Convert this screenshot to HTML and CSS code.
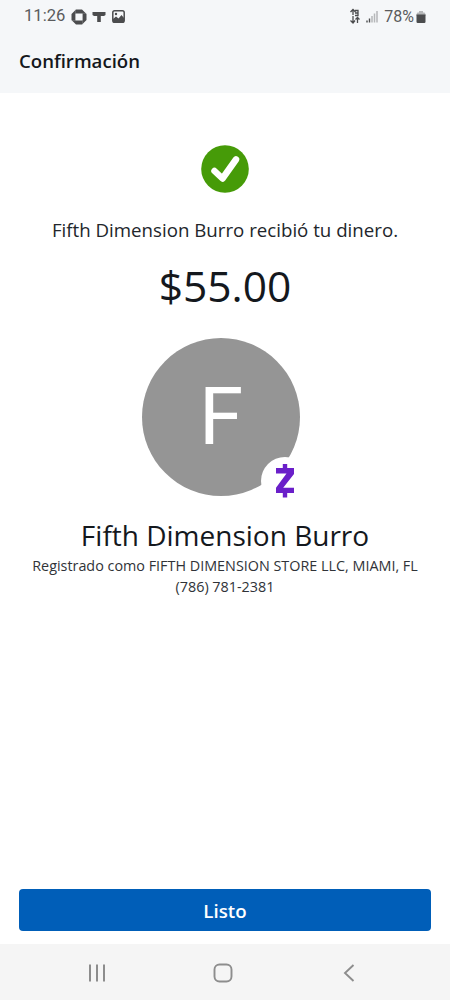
FILE: index.html
```html
<!DOCTYPE html>
<html lang="es">
<head>
    <meta charset="UTF-8">
    <meta name="viewport" content="width=device-width, initial-scale=1.0">
    <title>Confirmación</title>
    <link rel="stylesheet" href="styles.css">
</head>
<body>
    <div class="screen">
        <header class="header">
            <!-- Status bar -->
            <div class="status-bar">
                <span class="time">11:26</span>
                <svg class="icon-bank" width="16" height="16" viewBox="0 0 16 16">
                    <path fill="#4b4c4e" fill-rule="evenodd" d="M5 .5h6L15.500 5v6L11 15.500H5L.5 11V5zM4.400 4.400v7.200h7.200V4.400z"/>
                    <path stroke="#8b8d8f" stroke-width=".5" d="M4.400 .8v4M15.200 4.400h-4M11.600 15.200v-4M.8 11.600h4"/>
                </svg>
                <svg class="icon-tee" width="14" height="12" viewBox="0 0 14 12">
                    <path fill="#4b4c4e" d="M.5 1h13v3L12 5H8.800v6H5.200V5H2L.5 4z"/>
                </svg>
                <svg class="icon-image" width="13" height="13" viewBox="0 0 13 13">
                    <rect x=".8" y=".8" width="11.400" height="11.400" rx="1.800" fill="#f5f7f9" stroke="#4b4c4e" stroke-width="1.500"/>
                    <path fill="#4b4c4e" d="M1 12V9l3-2.500 2.500 2L9.500 5 12 8v4z"/>
                    <circle cx="4" cy="4" r="1.200" fill="#4b4c4e"/>
                </svg>
                <div class="status-right">
                    <svg width="12" height="17" viewBox="0 0 12 17" stroke="#4b4c4e" stroke-width="1.300" fill="none">
                        <path d="M1.500 4L4 1.500 6.500 4M4 2v5M6 2.500h3v5H6M6 5h3M1.500 12.500L4 15l2-2.500M4 8v7M6.500 11.500l2-2 2 2M8.500 10v5"/>
                    </svg>
                    <svg class="icon-signal" width="12" height="13" viewBox="0 0 12 13">
                        <path stroke="#4b4c4e" stroke-width="1.400" d="M1 12.500v-2M3.500 12.500v-4"/>
                        <path stroke="#b5b7b9" stroke-width="1.500" d="M6 12.500V6M8.500 12.500V3.500M11 12.500V1"/>
                    </svg>
                    <span class="battery-text">78%</span>
                    <svg width="10" height="14" viewBox="0 0 10 14">
                        <path fill="#b5b7b9" d="M3 1h4v1.500h1.500L9.500 4v2h-9V4l1-1.500H3z"/>
                        <path fill="#4b4c4e" d="M.5 4.500h9v7.300q0 1.200-1.200 1.200H1.700Q.5 13 .5 11.800z"/>
                    </svg>
                </div>
            </div>
            <h1>Confirmación</h1>
        </header>

        <main class="content">
            <svg class="check" width="48" height="48" viewBox="0 0 48 48">
                <circle cx="24" cy="24" r="23.800" fill="#469b08"/>
                <path d="M13.500 26l8 7.500L35 14.500" fill="none" stroke="#fff" stroke-width="6.500" stroke-linecap="round" stroke-linejoin="round"/>
            </svg>
            <p class="message">Fifth Dimension Burro recibió tu dinero.</p>
            <p class="amount">$55.00</p>

            <div class="avatar">
                <span class="initial">F</span>
                <div class="badge">
                    <svg width="20" height="34" viewBox="0 0 20 34">
                        <path fill="#6a1fc9" d="M7.800 0h4.400v4h6.800v6L8.200 23.800H19v5.200h-6.800v4.500H7.800V29H1v-5.300L11.500 9.500H1V4h6.800z"/>
                    </svg>
                </div>
            </div>

            <h2>Fifth Dimension Burro</h2>
            <p class="registered">Registrado como FIFTH DIMENSION STORE LLC, MIAMI, FL</p>
            <p class="phone">(786) 781-2381</p>
        </main>

        <div class="actions">
            <button class="done-button">Listo</button>
        </div>

        <!-- Android navigation -->
        <nav class="nav-bar">
            <svg width="20" height="20" viewBox="0 0 20 20" fill="none" stroke="#8d8d8d" stroke-width="2">
                <path d="M3 1.500v17M10 1.500v17M17 1.500v17"/>
            </svg>
            <svg width="20" height="20" viewBox="0 0 20 20" fill="none" stroke="#8d8d8d" stroke-width="1.900">
                <rect x="1.500" y="1.500" width="17" height="17" rx="5"/>
            </svg>
            <svg width="20" height="20" viewBox="0 0 20 20" fill="none" stroke="#8d8d8d" stroke-width="1.900">
                <path d="M14.500 2L6 10l8.500 8"/>
            </svg>
        </nav>
    </div>
</body>
</html>
```

FILE: styles.css
```css
/* General Styling */
* { box-sizing: border-box; }
body { margin: 0; background-color: #fff; color: #14181d; font-family: "Open Sans", "Noto Sans", sans-serif; }
h1, h2, p { margin: 0; font-weight: 400; white-space: nowrap; }
svg { display: block; flex: none; }
.screen { display: flex; flex-direction: column; height: 1000px; overflow: hidden; }

/* Header Styling */
.header { height: 93px; background-color: #f5f7f9; }
.status-bar { display: flex; align-items: center; height: 33px; padding: 0 24px; font-family: Roboto, sans-serif; font-size: 16px; color: #5a5b5d; }
.time { width: 42px; padding-bottom: 2px; font-size: 16.6px; }
.icon-bank { margin-left: 5px; }
.icon-tee { margin-left: 5px; }
.icon-image { margin-left: 6px; }
.status-right { display: flex; align-items: center; margin-left: auto; }
.icon-signal { margin-left: 5px; }
.battery-text { margin: 0 2px 0 6px; }
h1 { padding-left: 19px; font-size: 18.6px; font-weight: 600; line-height: 56px; }

/* Content Styling */
.content { display: flex; flex: 1; flex-direction: column; align-items: center; padding-top: 52px; }
.message { margin-top: 23px; font-size: 18.7px; line-height: 28px; color: #22262b; }
.amount { margin-top: 12px; font-size: 42.5px; line-height: 60px; }

/* Avatar Styling */
.avatar { position: relative; width: 166px; height: 158px; margin-top: 22px; padding-right: 8px; }
.initial { display: block; width: 158px; height: 158px; border-radius: 50%; background-color: #959595; color: #fff; font-family: Roboto, sans-serif; font-size: 80px; line-height: 158px; text-align: center; }
.badge { position: absolute; left: 119px; top: 119px; display: flex; align-items: center; justify-content: center; width: 48px; height: 48px; border-radius: 50%; background-color: #fff; }

/* Recipient Styling */
h2 { margin-top: 20px; font-size: 28px; line-height: 38px; }
.registered, .phone { font-size: 14.37px; line-height: 21px; color: #303338; }
.registered { margin-top: 1px; }

/* Button Styling */
.actions { padding: 0 19px 13px; }
.done-button { display: block; width: 100%; height: 42px; padding: 0; border: 0; border-radius: 4px; background-color: #005eb8; color: #fff; font-family: inherit; font-size: 18.7px; font-weight: 600; }

/* Navigation Styling */
.nav-bar { display: flex; align-items: center; justify-content: space-between; height: 56px; padding: 2px 91px 0 87px; background-color: #f5f5f5; }
```
